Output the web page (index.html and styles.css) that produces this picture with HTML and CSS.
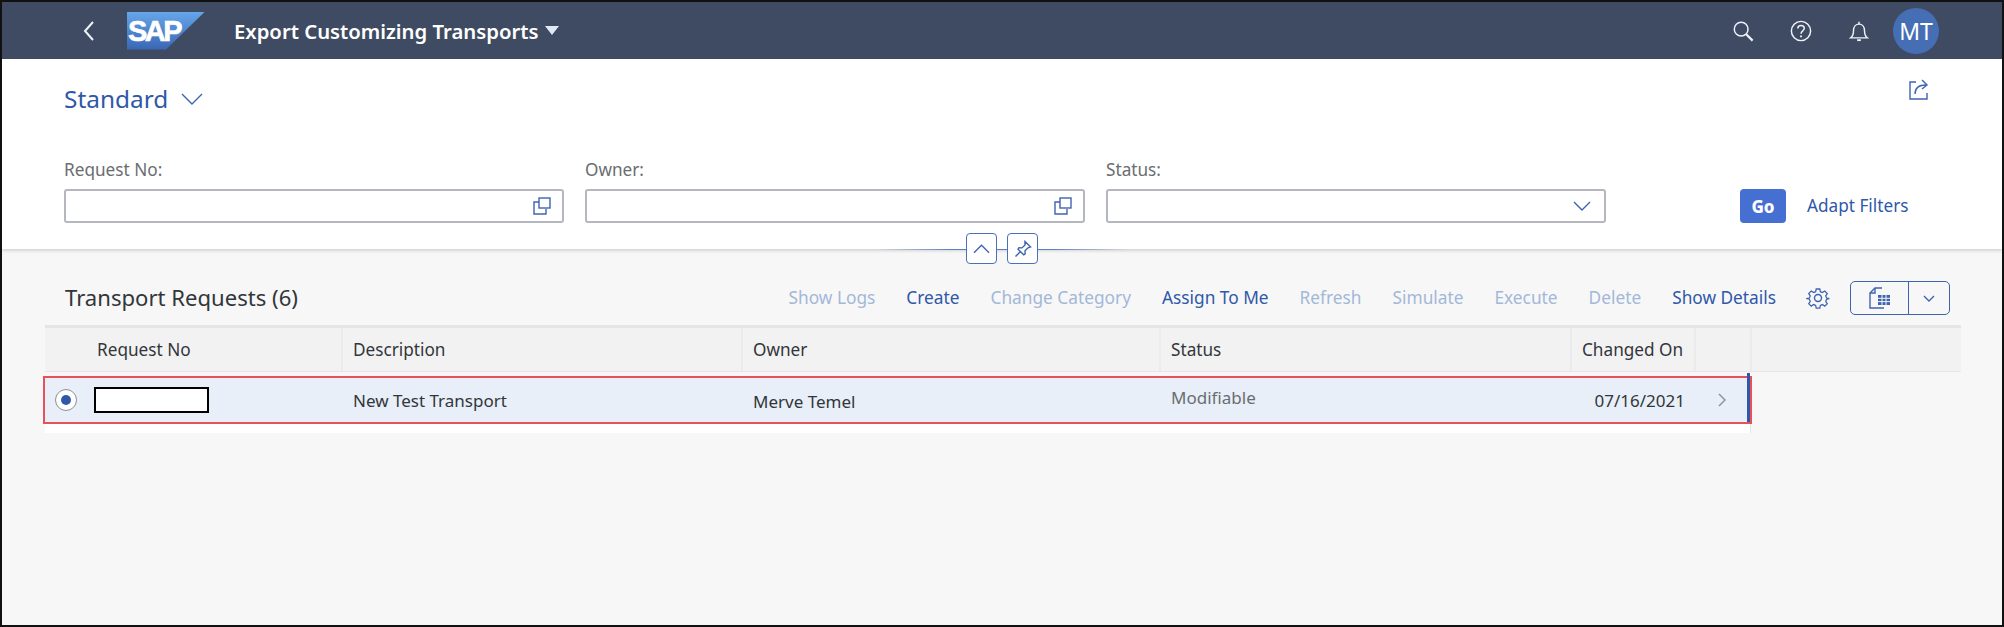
FILE: index.html
```html
<!DOCTYPE html>
<html lang="en">
<head>
<meta charset="utf-8">
<title>Export Customizing Transports</title>
<link rel="stylesheet" href="styles.css">
</head>
<body>
<div class="frame">
  <header class="shell">
    <svg class="ic back" viewBox="0 0 14 24"><path d="M11 3 3 12l8 9"/></svg>
    <div class="logo"><span>SAP</span></div>
    <div class="app-title">Export Customizing Transports</div>
    <div class="caret"></div>
    <div class="shell-right">
      <svg class="ic shell-ic" viewBox="0 0 24 24"><circle cx="10" cy="10" r="7.5"/><path d="m15.5 15.5 7 7" stroke-width="2.4"/></svg>
      <svg class="ic shell-ic" viewBox="0 0 24 24"><circle cx="12" cy="12" r="10.5"/><path d="M8.5 9.2c0-2 1.6-3.2 3.6-3.2s3.5 1.3 3.5 3.1c0 2.900-3.600 2.800-3.600 5.900"/><path d="M12 16.800v2" stroke-width="2"/></svg>
      <svg class="ic shell-ic" viewBox="0 0 24 24"><path d="M3 19.500h18c-2.500-2-3-4-3-8 0-4-2.500-7-6-7s-6 3-6 7c0 4-.5 6-3 8Z"/><path d="M12 2v2.500"/><path d="M10 22h4" stroke-width="2"/></svg>
      <div class="avatar">MT</div>
    </div>
  </header>

  <section class="filterbar">
    <div class="variant-row">
      <span class="variant">Standard</span>
      <svg class="ic variant-ic" viewBox="0 0 22 12"><path d="m1 1 10 10L21 1"/></svg>
      <svg class="ic share" viewBox="0 0 22 22"><path d="M8 3H2v17h17v-6"/><path d="M7 15c0-6 4-9 11-9"/><path d="m14 1 5 5-5 4"/></svg>
    </div>
    <div class="filters">
      <div class="field">
        <label class="field-label">Request No:</label>
        <div class="input"><svg class="ic vh" viewBox="0 0 18 18"><path d="M6 5H1v12h12v-5"/><rect x="6" y="1" width="11" height="10"/></svg></div>
      </div>
      <div class="field">
        <label class="field-label">Owner:</label>
        <div class="input"><svg class="ic vh" viewBox="0 0 18 18"><path d="M6 5H1v12h12v-5"/><rect x="6" y="1" width="11" height="10"/></svg></div>
      </div>
      <div class="field">
        <label class="field-label">Status:</label>
        <div class="input"><svg class="ic dd" viewBox="0 0 18 10"><path d="m1 1 8 8 8-8"/></svg></div>
      </div>
      <button class="go">Go</button>
      <span class="adapt">Adapt Filters</span>
    </div>
    <div class="collapse">
      <div class="c-btn"><svg class="ic" viewBox="0 0 18 10" width="17" height="10"><path d="m1 9 8-8 8 8"/></svg></div>
      <div class="c-btn"><svg class="ic" viewBox="0 0 18 18" width="18" height="18"><path d="m11 1.500 5.500 5.500-2.500.8-3 3 .2 3-1.500 1L4 9.200l1-1.500 3 .2 3-3Z"/><path d="m6.500 11.500-5 5"/></svg></div>
    </div>
  </section>

  <main class="content">
    <div class="toolbar">
      <h2 class="tbl-title">Transport Requests (6)</h2>
      <div class="actions">
        <span class="act off">Show Logs</span>
        <span class="act">Create</span>
        <span class="act off">Change Category</span>
        <span class="act">Assign To Me</span>
        <span class="act off">Refresh</span>
        <span class="act off">Simulate</span>
        <span class="act off">Execute</span>
        <span class="act off">Delete</span>
        <span class="act">Show Details</span>
      </div>
      <svg class="ic gear" viewBox="0 0 24 24"><circle cx="12" cy="12" r="3.500"/><path d="M10 2h4l.6 3 2.300 1 2.600-1.700 2.800 2.800-1.700 2.600 1 2.300 3 .6v0l-3 .8-1 2.300 1.700 2.500-2.800 2.800-2.600-1.700-2.300 1-.6 3h-4l-.6-3-2.300-1-2.600 1.700-2.800-2.800 1.700-2.500-1-2.300-3-.8.000-.1 3-.5 1-2.300L1.700 7.100l2.800-2.800L7.100 6l2.300-1Z" transform="translate(1.200 1.200) scale(.9)"/></svg>
      <div class="split">
        <div class="split-main"><svg class="ic" viewBox="0 0 22 22" width="22" height="22"><path d="M13 1H6L1 6v15h14"/><path d="M6 1v5H1"/><rect x="9" y="8" width="12" height="10" fill="#3f63b0" stroke="none"/><path d="M9 11.300h12M9 14.600h12M13 8v10M17 8v10" stroke="#f7f7f7" stroke-width="1"/></svg></div>
        <div class="split-arrow"><svg class="ic" viewBox="0 0 12 7" width="12" height="7"><path d="m1 1 5 5 5-5"/></svg></div>
      </div>
    </div>

    <div class="table">
      <div class="thead">
        <div class="th">Request No</div>
        <div class="th">Description</div>
        <div class="th">Owner</div>
        <div class="th">Status</div>
        <div class="th">Changed On</div>
        <div class="th"></div>
      </div>
      <div class="row">
        <div class="cell cell-first"><span class="radio"><span class="dot"></span></span><span class="redact"></span></div>
        <div class="cell">New Test Transport</div>
        <div class="cell cell-owner">Merve Temel</div>
        <div class="cell cell-status">Modifiable</div>
        <div class="cell cell-date">07/16/2021</div>
        <div class="cell cell-nav"><svg class="ic chev" viewBox="0 0 8 14" width="8" height="14"><path d="m1 1 6 6-6 6"/></svg></div>
      </div>
      <div class="strip"></div>
    </div>
  </main>
</div>
</body>
</html>
```
FILE: styles.css
```css
* { box-sizing: border-box; }
html, body { margin: 0; padding: 0; }
body { font-family: "Noto Sans", "Liberation Sans", sans-serif; color: #32363a; }
.frame { width: 2004px; height: 627px; border: 2px solid #111; display: flex; flex-direction: column; background: #f7f7f7; overflow: hidden; }
.ic { fill: none; stroke: #3f63b0; stroke-width: 1.4; display: block; flex: none; }

.shell { height: 57px; background: #3f4b62; display: flex; align-items: center; flex: none; padding-left: 80px; }
.shell .ic { stroke: #eef3fb; }
.back { width: 14px; height: 24px; stroke-width: 2; }
.logo { width: 78px; height: 38px; margin-left: 31px; background: linear-gradient(#66a6ea, #3a66b3); clip-path: polygon(0 0, 100% 0, 50% 100%, 0 100%); overflow: hidden; }
.logo span { display: block; font: bold 29px/38px "Liberation Sans", sans-serif; letter-spacing: -2.500px; color: #fff; padding-left: 1px; -webkit-text-stroke: .6px #fff; }
.app-title { margin-left: 29px; font-size: 20.300px; font-weight: 600; color: #fff; }
.caret { margin-left: 7px; width: 0; height: 0; border-left: 7px solid transparent; border-right: 7px solid transparent; border-top: 9px solid #dfe9f8; }
.shell-right { margin-left: auto; margin-right: 63px; display: flex; align-items: center; }
.shell-ic { width: 22px; height: 22px; margin-right: 36px; stroke-width: 1.6; }
.avatar { width: 46px; height: 46px; border-radius: 50%; background: #466eb4; color: #fff; font-size: 23px; display: flex; align-items: center; justify-content: center; margin-left: -13px; }

.filterbar { height: 190px; flex: none; background: #fff; position: relative; padding: 0 63px 0 62px; box-shadow: 0 2px 3px rgba(0,0,0,.14); }
.variant-row { display: flex; align-items: center; height: 70px; padding-top: 9px; }
.variant { font-size: 24.400px; color: #2f58a8; }
.variant-ic { width: 22px; height: 12px; margin-left: 13px; stroke-width: 1.400; }
.share { width: 22px; height: 22px; margin-left: auto; margin-right: 9px; margin-top: -17px; }
.filters { display: flex; align-items: flex-end; padding-top: 29px; }
.field { width: 500px; margin-right: 21px; }
.field-label { display: block; font-size: 17.200px; color: #6a6d70; line-height: 23px; margin-bottom: 8px; }
.input { height: 34px; border: 2px solid #b4b7bd; border-radius: 3px; background: #fff; display: flex; align-items: center; justify-content: flex-end; padding-right: 11px; }
.vh { width: 18px; height: 18px; }
.dd { width: 18px; height: 10px; padding: 0; margin-right: 2px; }
.go { width: 46px; height: 34px; margin-left: 113px; border: 0; border-radius: 4px; background: #456fd0; color: #fff; font: 800 17px "Noto Sans", sans-serif; padding: 0; }
.adapt { margin-left: 21px; font-size: 17.200px; line-height: 34px; color: #2f58a8; }
.collapse { position: absolute; left: 964px; top: 174px; display: flex; gap: 10px; }
.collapse::before { content: ""; position: absolute; left: -90px; right: -90px; top: 16px; height: 1px; background: linear-gradient(90deg, transparent, #5b7fc0 30%, #5b7fc0 70%, transparent); }
.c-btn { position: relative; width: 31px; height: 31px; background: #fff; border: 1px solid #4c70b6; border-radius: 4px; display: flex; align-items: center; justify-content: center; }

.content { flex: 1; padding: 32px 44px 0 43px; }
.toolbar { display: flex; align-items: center; height: 34px; margin-right: 8px; padding-left: 20px; }
.tbl-title { margin: -2px 0 0; font-size: 22.100px; font-weight: 400; color: #32363a; }
.actions { margin-left: auto; display: flex; gap: 31px; margin-top: -1px; }
.act { font-size: 17.300px; color: #2f58a8; white-space: nowrap; }
.act.off { color: #a3b7d9; }
.gear { width: 24px; height: 24px; margin-left: 30px; }
.split { display: flex; width: 100px; height: 34px; margin-left: 20px; border: 1px solid #3f63b0; border-radius: 5px; }
.split-main { width: 58px; display: flex; align-items: center; justify-content: center; border-right: 1px solid #3f63b0; }
.split-arrow { flex: 1; display: flex; align-items: center; justify-content: center; }

.table { margin-top: 10px; }
.thead, .row { display: grid; grid-template-columns: 298px 400px 418px 411px 124px 56px; }
.thead { height: 47px; background: #f2f2f2; border-top: 3px solid #e5e5e5; border-bottom: 1px solid #e5e5e5; width: 1916px; }
.th { border-right: 2px solid #ebebeb; font-size: 17.200px; color: #32363a; display: flex; align-items: center; padding-left: 10px; }
.th:first-child { padding-left: 52px; }
.row { height: 48px; width: 1709px; margin-left: -2px; margin-top: 4px; background: #e8eff8; border: 2px solid #e8505b; position: relative; }
.row::after { content: ""; position: absolute; right: 0; top: -5px; bottom: 0; width: 3px; background: #2f58a8; }
.cell { display: flex; align-items: center; font-size: 17px; padding-left: 10px; color: #32363a; }
.cell-first { padding-left: 10px; margin-right: -2px; }
.radio { width: 22px; height: 22px; border-radius: 50%; background: #fff; border: 1px solid #8b8f94; display: flex; align-items: center; justify-content: center; }
.dot { width: 10px; height: 10px; border-radius: 50%; background: #2f58a8; }
.redact { width: 115px; height: 26px; margin-left: 17px; border: 2px solid #000; background: #fff; }
.cell-owner { padding-top: 3px; }
.cell-status { color: #6a6d70; padding-bottom: 5px; }
.cell-date { justify-content: flex-end; padding-right: 11px; padding-left: 0; }
.cell-nav { padding-left: 22px; }
.chev { stroke: #8b8f94; }
.strip { height: 9px; width: 1706px; background: #fff; border-right: 1px solid #e5e5e5; }
```
